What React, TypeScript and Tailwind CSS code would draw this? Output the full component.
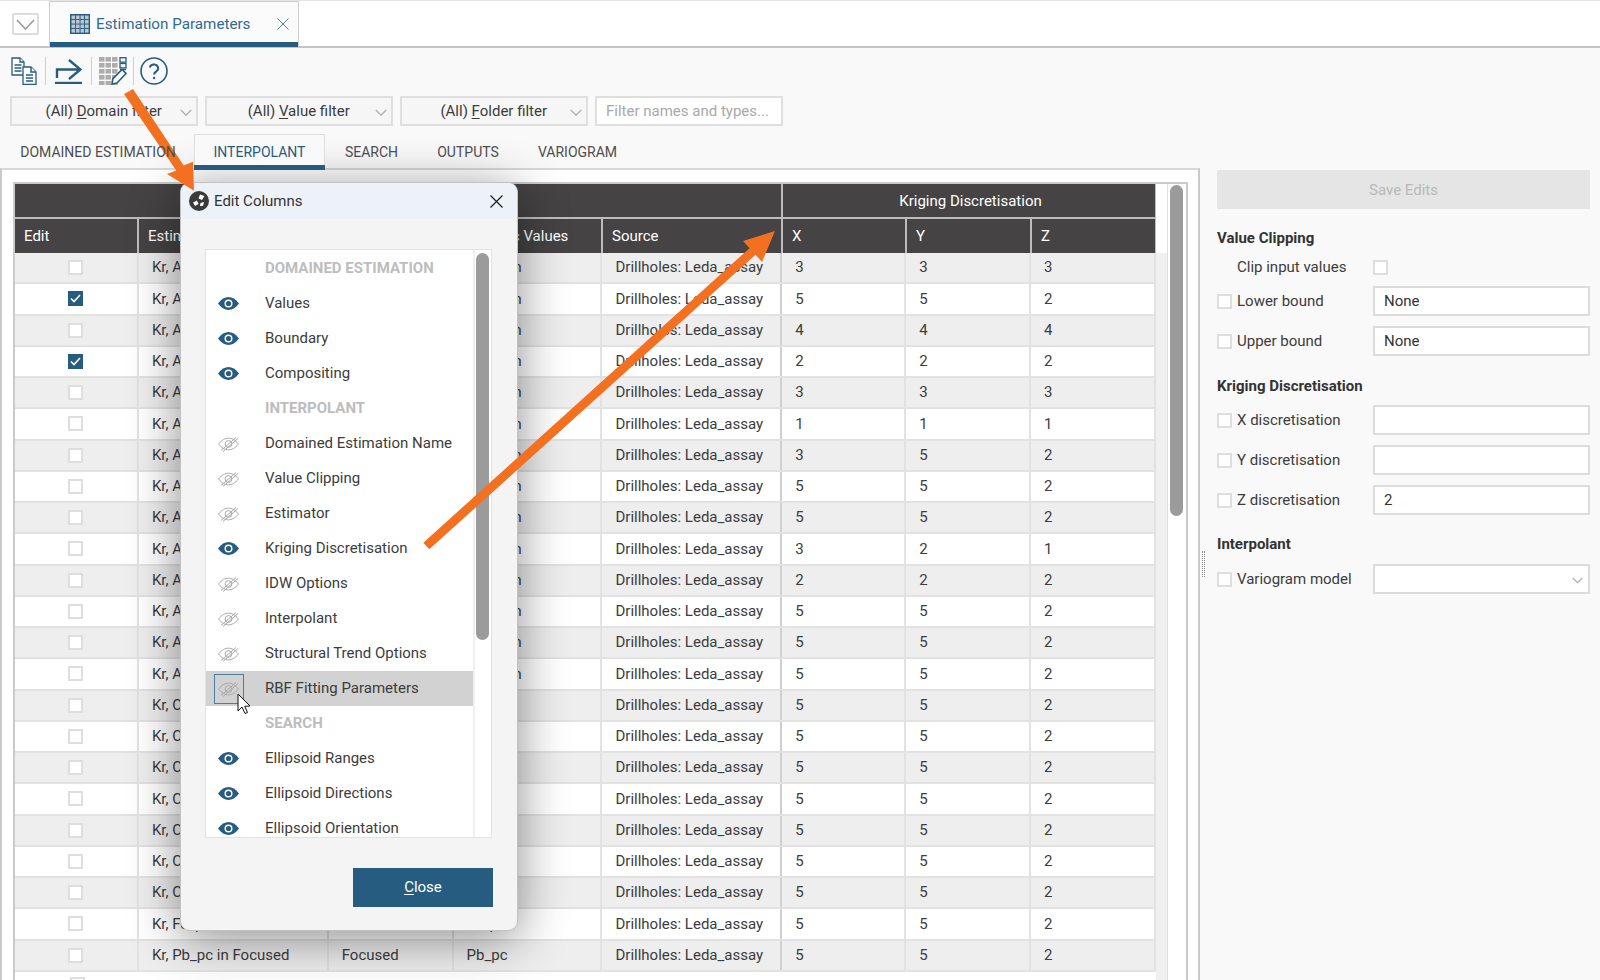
const navy = "#265c80";

const sectionOne = ["Values", "Boundary", "Compositing"];
const interpolantItems: [string, boolean][] = [
  ["Domained Estimation Name", false],
  ["Value Clipping", false],
  ["Estimator", false],
  ["Kriging Discretisation", true],
  ["IDW Options", false],
  ["Interpolant", false],
  ["Structural Trend Options", false],
];
const sectionThree = ["Ellipsoid Ranges", "Ellipsoid Directions", "Ellipsoid Orientation"];

const xyz = [
  [3, 3, 3], [5, 5, 2], [4, 4, 4], [2, 2, 2], [3, 3, 3], [1, 1, 1], [3, 5, 2], [5, 5, 2],
  [5, 5, 2], [3, 2, 1], [2, 2, 2], [5, 5, 2], [5, 5, 2], [5, 5, 2], [5, 5, 2], [5, 5, 2],
  [5, 5, 2], [5, 5, 2], [5, 5, 2], [5, 5, 2], [5, 5, 2], [5, 5, 2], [5, 5, 2],
];

function estimatorFor(i: number) {
  if (i < 14) return ["Kr, Ag_ppm in Ash", "Ash", "Ag_ppm"];
  if (i < 21) return ["Kr, Cu_pc in Ash", "Ash", "Cu_pc"];
  if (i === 21) return ["Kr, Fe_pc in Focused", "Focused", "Fe_pc"];
  return ["Kr, Pb_pc in Focused", "Focused", "Pb_pc"];
}

function Chevron({ className, width = 12 }: { className?: string; width?: number }) {
  return (
    <svg width={width} height={width * 0.6} viewBox="0 0 14 8" className={className}>
      <polyline points="1,1 7,7 13,1" fill="none" stroke="#b0b0b0" strokeWidth="1.6" />
    </svg>
  );
}

function EyeOn() {
  return (
    <svg width="21" height="13" viewBox="0 0 21 13">
      <path d="M0 6.5C3.5 2 6.8 0 10.5 0S17.5 2 21 6.5C17.5 11 14.2 13 10.5 13S3.5 11 0 6.5Z" fill={navy} />
      <circle cx="10.5" cy="6.5" r="4" fill="#fff" />
      <circle cx="10.5" cy="6.5" r="2.6" fill={navy} />
    </svg>
  );
}

function EyeOff() {
  return (
    <svg width="21" height="16" viewBox="0 0 21 16" fill="none" stroke="#a9a9a9" strokeWidth="1">
      <path d="M0.5 8C4 3.8 7 2.2 10.5 2.2S17 3.8 20.5 8C17 12.2 14 13.8 10.5 13.8S4 12.2 0.5 8Z" />
      <circle cx="10.5" cy="8" r="3.4" />
      <path d="M3 14.5L18 1.5M5 15.5L20 2.5" />
    </svg>
  );
}

function Checkbox({ checked }: { checked?: boolean }) {
  if (checked) {
    return (
      <span className="flex h-[15px] w-[15px] items-center justify-center bg-[#265c80]">
        <svg width="11" height="9" viewBox="0 0 11 9">
          <polyline points="1,4.5 4,7.5 10,1" fill="none" stroke="#fff" strokeWidth="1.6" />
        </svg>
      </span>
    );
  }
  return <span className="block h-[15px] w-[15px] border-2 border-[#dedede] bg-white" />;
}

function ToolbarIcons() {
  return (
    <div className="flex h-[46px] items-center pl-[11px]">
      <svg width="26" height="28" viewBox="0 0 26 28" fill="#fff" stroke={navy} strokeWidth="1.3">
        <path d="M1 1H9L13 5V18H1Z" />
        <path d="M9 1V5H13M3.5 8H10.5M3.5 11H10.5M3.5 14H10.5" />
        <path d="M12 10H20L25 15V27.5H12Z" />
        <path d="M20 10V15H25M15 18H22M15 21H22M15 24H22" strokeWidth="1.5" />
      </svg>
      <span className="ml-[8px] h-[28px] w-px bg-[#cfcfcf]" />
      <svg className="ml-[9px]" width="27" height="26" viewBox="0 0 27 26" fill="none" stroke={navy}>
        <path d="M2 20V11.5H25M14 2L25.5 11.5L14 21" strokeWidth="2.4" />
        <path d="M0 25H27" strokeWidth="2.4" />
      </svg>
      <span className="ml-[9px] h-[28px] w-px bg-[#cfcfcf]" />
      <svg className="ml-[7px]" width="28" height="28" viewBox="0 0 28 28">
        <g fill="#adadad">
          {[0, 6.5, 13].map((x) =>
            [0, 6, 12, 18, 24].map((y) => <rect key={`${x}-${y}`} x={x} y={y} width="5.5" height="4.6" />)
          )}
        </g>
        <g fill="none" stroke={navy} strokeWidth="1.3">
          <rect x="21" y="0.7" width="6" height="4.4" />
          <rect x="21" y="6.5" width="6" height="4.4" />
          <path d="M21 12.5H27" />
          <path d="M13 27L13.8 22L23 12.5L27 16.5L18 26Z" fill="#fff" strokeWidth="1.6" />
        </g>
      </svg>
      <span className="ml-[6px] h-[28px] w-px bg-[#cfcfcf]" />
      <svg className="ml-[6px]" width="28" height="28" viewBox="0 0 28 28" fill="none" stroke={navy} strokeWidth="1.6">
        <circle cx="14" cy="14" r="13" />
        <path d="M9.8 10.5a4.3 4.3 0 0 1 8.4 1c0 2.9-4.2 3.3-4.2 6" strokeWidth="2" />
        <circle cx="14" cy="21" r="1.2" fill={navy} stroke="none" />
      </svg>
    </div>
  );
}

function FilterSelect({ before, letter, after }: { before: string; letter: string; after: string }) {
  return (
    <div className="relative flex h-[30px] w-[187.5px] items-center justify-center border-2 border-[#dfdfdf] bg-[#f6f6f6] text-[#3c3c3c]">
      <span>
        {before}
        <span className="underline underline-offset-2">{letter}</span>
        {after}
      </span>
      <Chevron className="absolute right-[4px] top-[11px]" />
    </div>
  );
}

function TableHeader() {
  const cols = [
    "w-[124px]", "w-[190px]", "w-[125px]", "w-[149px]", "w-[180px]", "w-[124px]", "w-[125px]", "w-[125px]",
  ];
  const labels = ["Edit", "Estimator", "Domain", "Numeric Values", "Source", "X", "Y", "Z"];
  return (
    <div className="w-[1142px] bg-[#454344] text-white">
      <div className="flex h-[35px] border-b-2 border-[#bdbdbd]">
        <div className="w-[768px] border-r-2 border-[#bdbdbd]" />
        <div className="flex w-[374px] items-center justify-center border-r-2 border-[#bdbdbd] pl-[3px] pt-[1px]">
          Kriging Discretisation
        </div>
      </div>
      <div className="flex h-[34px]">
        {labels.map((label, i) => (
          <div key={label} className={`${cols[i]} flex items-center border-r-2 border-[#bdbdbd] pl-[9px] pt-[1px]`}>
            {label}
          </div>
        ))}
      </div>
    </div>
  );
}

function TableRow({ index }: { index: number }) {
  const [name, domain, value] = estimatorFor(index);
  const [x, y, z] = xyz[index];
  const cell = "flex h-full items-center border-r-2 border-[#e2e2e2] pl-[13px]";
  return (
    <div className={`flex h-[31.25px] border-b-2 border-[#e2e2e2] text-[#3c3c3c] ${index % 2 === 0 ? "bg-[#eeeeee]" : "bg-white"}`}>
      <div className="flex h-full w-[124px] items-center justify-center border-r-2 border-[#e2e2e2]">
        <Checkbox checked={index === 1 || index === 3} />
      </div>
      <div className={`${cell} w-[190px]`}>{name}</div>
      <div className={`${cell} w-[125px]`}>{domain}</div>
      <div className={`${cell} w-[149px]`}>{value}</div>
      <div className={`${cell} w-[180px] border-r-[#cfcfcf]`}>Drillholes: Leda_assay</div>
      <div className={`${cell} w-[124px]`}>{x}</div>
      <div className={`${cell} w-[125px]`}>{y}</div>
      <div className={`${cell} w-[125px]`}>{z}</div>
    </div>
  );
}

function ColumnRow({ label, on, hover }: { label: string; on?: boolean; hover?: boolean }) {
  return (
    <div className={`relative flex h-[35px] items-center ${hover ? "bg-[#d2d2d2]" : ""}`}>
      <span className="flex w-[59px] pl-[12px]">{on ? <EyeOn /> : <EyeOff />}</span>
      <span>{label}</span>
      {hover && <span className="absolute left-[8px] top-[3px] h-[30px] w-[30px] border border-[#4a80a5]" />}
    </div>
  );
}

function SectionRow({ label }: { label: string }) {
  return <div className="flex h-[35px] items-center pl-[59px] font-bold text-[#bdbdbd]">{label}</div>;
}

function EditColumnsDialog() {
  return (
    <div className="absolute left-[180px] top-[182px] flex h-[749px] w-[338px] flex-col overflow-hidden rounded-[10px] border border-[#c2c2c2] bg-[#f4f4f4] text-[#3c3c3c] shadow-[0_8px_50px_rgba(0,0,0,0.45)]">
      <div className="flex h-[36px] items-center bg-[#edf2f9] pl-[8px] pr-[14px] text-[#333]">
        <svg width="20" height="20" viewBox="0 0 20 20">
          <circle cx="10" cy="10" r="10" fill="#3a3a3a" />
          <path d="M11 3.5L15.5 5L13 9L9.5 7.5Z M4 11.5L8 9.5L9.5 13L6 15Z M11.5 12L15 11L14 15L11 15Z" fill="#fff" />
        </svg>
        <span className="ml-[5px]">Edit Columns</span>
        <svg className="ml-auto" width="13" height="13" viewBox="0 0 13 13" stroke="#222" strokeWidth="1.3">
          <path d="M0.5 0.5L12.5 12.5M12.5 0.5L0.5 12.5" />
        </svg>
      </div>
      <div className="ml-[24px] mt-[30px] flex h-[589px] w-[287px] border border-[#e2e2e2] bg-white">
        <div className="h-full w-[269px] overflow-hidden border-r-2 border-[#f0f0f0] pt-[1px]">
          <SectionRow label="DOMAINED ESTIMATION" />
          {sectionOne.map((s) => <ColumnRow key={s} label={s} on />)}
          <SectionRow label="INTERPOLANT" />
          {interpolantItems.map(([s, on]) => <ColumnRow key={s} label={s} on={on} />)}
          <ColumnRow label="RBF Fitting Parameters" hover />
          <SectionRow label="SEARCH" />
          {sectionThree.map((s) => <ColumnRow key={s} label={s} on />)}
        </div>
        <div className="flex-1 pl-[1px] pt-[3px]">
          <div className="h-[387px] w-[13px] rounded-full bg-[#9b9b9b]" />
        </div>
      </div>
      <button className="ml-[172px] mt-[30px] flex h-[39px] w-[140px] items-center justify-center bg-[#265c80] text-white">
        <span><span className="underline underline-offset-2">C</span>lose</span>
      </button>
    </div>
  );
}

function Field({ label, value, select }: { label: string; value?: string; select?: boolean }) {
  return (
    <div className="flex h-[30px] items-center">
      <Checkbox />
      <span className="ml-[5px] w-[136px] pt-[1px] text-[#3c3c3c]">{label}</span>
      <div className="relative flex h-[30px] w-[217px] items-center border-2 border-[#dcdcdc] bg-white pl-[9px] pt-[1px] text-[#333]">
        {value}
        {select && <Chevron className="absolute right-[5px] top-[11px]" width={11} />}
      </div>
    </div>
  );
}

function Sidebar() {
  return (
    <div className="ml-[17px] w-[373px] pt-[2px] text-[#333]">
      <div className="flex h-[39px] items-center justify-center bg-[#e5e5e5] pt-[1px] text-[#b9b9b9]">Save Edits</div>
      <div className="mt-[19px] h-[20px] font-bold leading-[20px]">Value Clipping</div>
      <div className="mt-[11px] flex h-[16px] items-center">
        <span className="ml-[20px] w-[136px] text-[#3c3c3c]">Clip input values</span>
        <Checkbox />
      </div>
      <div className="mt-[11px] flex flex-col gap-[10px]">
        <Field label="Lower bound" value="None" />
        <Field label="Upper bound" value="None" />
      </div>
      <div className="mt-[20px] h-[20px] font-bold leading-[20px]">Kriging Discretisation</div>
      <div className="mt-[9px] flex flex-col gap-[10px]">
        <Field label="X discretisation" />
        <Field label="Y discretisation" />
        <Field label="Z discretisation" value="2" />
      </div>
      <div className="mt-[19px] h-[20px] font-bold leading-[20px]">Interpolant</div>
      <div className="mt-[10px]">
        <Field label="Variogram model" select />
      </div>
    </div>
  );
}

export default function App() {
  return (
    <div className="relative flex h-[980px] w-[1600px] flex-col overflow-hidden bg-[#f9f9f9] font-['Roboto',sans-serif] text-[15px]">
      {/* Document tab strip */}
      <div className="flex h-[48px] border-b-2 border-t border-[#c4c4c4] border-t-[#e4e4e4] bg-white">
        <div className="ml-[12px] mt-[12px] flex h-[22px] w-[27px] items-center justify-center rounded-[2px] border-2 border-[#dcdcdc]">
          <svg width="19" height="11" viewBox="0 0 19 11">
            <polyline points="1,1 9.5,10 18,1" fill="none" stroke="#9a9a9a" strokeWidth="1.6" />
          </svg>
        </div>
        <div className="relative ml-[10px] flex h-[46px] w-[250px] items-center border-x border-t border-[#cfcfcf] bg-[#fbfbfb] pb-[1px] pl-[20px] text-[15.2px] text-[#2f6a91]">
          <svg width="20" height="20" viewBox="0 0 20 20">
            <rect width="20" height="20" fill={navy} />
            {[1.5, 6, 10.5, 15].map((x) =>
              [1.5, 6, 10.5, 15].map((y) => (
                <rect key={`${x}-${y}`} x={x} y={y} width="3.6" height="3.6" fill="#b9c6cf" />
              ))
            )}
          </svg>
          <span className="ml-[6px]">Estimation Parameters</span>
          <svg className="ml-auto mr-[9px]" width="12" height="12" viewBox="0 0 12 12" stroke="#4f7e9e">
            <path d="M0.5 0.5L11.5 11.5M11.5 0.5L0.5 11.5" />
          </svg>
          <span className="absolute bottom-0 left-0 h-[5px] w-full bg-[#265c80]" />
        </div>
      </div>

      <ToolbarIcons />

      <div className="mt-[2px] flex gap-[7.5px] px-[10px]">
        <FilterSelect before="(All) " letter="D" after="omain filter" />
        <FilterSelect before="(All) " letter="V" after="alue filter" />
        <FilterSelect before="(All) " letter="F" after="older filter" />
        <div className="flex h-[30px] w-[187.5px] items-center border-2 border-[#dfdfdf] bg-white pl-[9px] pt-[1px] text-[#a9a9a9]">
          Filter names and types...
        </div>
      </div>

      {/* Section tabs */}
      <div className="relative z-10 mt-[8px] flex h-[34px] text-[14px] uppercase text-[#4d4d4d]">
        <div className="flex h-[34px] w-[194px] items-center justify-center pl-[2px] pt-[3px]">Domained Estimation</div>
        <div className="relative flex h-[36px] w-[131px] items-center justify-center border-x border-t border-[#dddddd] bg-[#f9f9f9] text-[#265c80]">
          Interpolant
          <span className="absolute -inset-x-px bottom-0 h-[5px] bg-[#265c80]" />
        </div>
        <div className="flex w-[92px] items-center justify-center pl-[1px] pt-[3px]">Search</div>
        <div className="flex w-[101px] items-center justify-center pl-[1px] pt-[3px]">Outputs</div>
        <div className="flex w-[118px] items-center justify-center pl-[1px] pt-[3px]">Variogram</div>
      </div>

      <div className="flex min-h-0 flex-1">
        <div className="h-[830px] w-[1200px] border-x-2 border-t-2 border-[#c9c9c9] border-t-[#d8d8d8] bg-white pl-[11px] pt-[12px]">
          <div className="flex h-[810px] w-[1175px] border-2 border-[#cacaca]">
            <div className="overflow-hidden">
              <TableHeader />
              {xyz.map((_, i) => <TableRow key={i} index={i} />)}
              <div className="flex h-[31.25px] text-[#3c3c3c]">
                <div className="flex w-[124px] justify-center pt-[5px]"><Checkbox /></div>
                <div className="ml-[464px] pl-[13px] leading-[31px]">Drillholes: Leda_assay</div>
              </div>
            </div>
            <div className="flex h-full w-[12px] flex-col border-r border-[#e0e0e0]">
              <div className="h-[69px] bg-white" />
              <div className="flex-1 bg-[#f0f0f0]" />
            </div>
            <div className="w-[18px] pl-[2px] pt-[1px]">
              <div className="h-[331px] w-[13px] rounded-full bg-[#9b9b9b]" />
            </div>
          </div>
        </div>
        <div className="relative">
          <span className="absolute left-[2px] top-[383px] h-[26px] w-[3px] border-x border-dotted border-[#8c8c8c]" />
          <Sidebar />
        </div>
      </div>

      <EditColumnsDialog />

      {/* Annotation arrows and pointer */}
      <svg className="pointer-events-none absolute left-0 top-0" width="1600" height="980" viewBox="0 0 1600 980">
        <polygon points="124,94 133,89 183.7,165.6 193,161.7 194,190.7 167,174 176.3,170.4" fill="#f37021" />
        <polygon points="423.3,542.7 749.5,248.2 743,241 775,231 762,262 755.5,254.8 429.3,549.3" fill="#f37021" />
        <path d="M238 694V711L242 707L245 713.5L247.5 712.5L244.8 706.3L250 706Z" fill="#fff" stroke="#111" strokeWidth="1" />
      </svg>
    </div>
  );
}
